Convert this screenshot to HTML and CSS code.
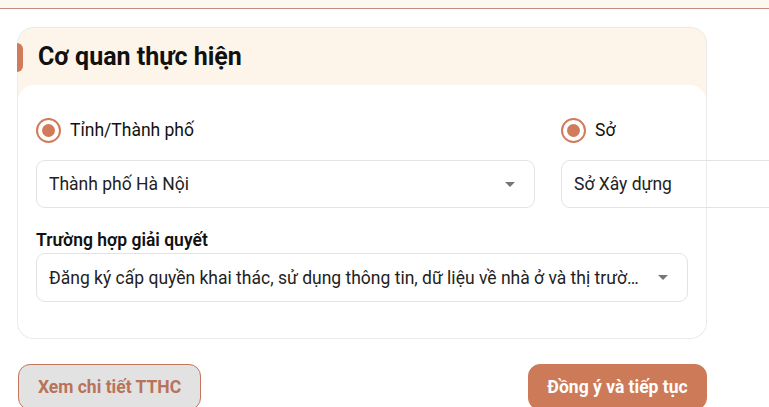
FILE: index.html
```html
<!DOCTYPE html>
<html lang="vi">
<head>
<meta charset="utf-8">
<link rel="stylesheet" href="styles.css">
</head>
<body>
<div class="topband"></div>
<main class="page">
  <section class="card">
    <header class="card-head">
      <h2 class="card-title">Cơ quan thực hiện</h2>
    </header>
    <div class="card-body">
      <div class="grid">
        <div class="col">
          <label class="radio"><span class="radio-dot"></span><span class="radio-label">Tỉnh/Thành phố</span></label>
          <div class="select"><span class="select-text">Thành phố Hà Nội</span><span class="caret"></span></div>
        </div>
        <div class="col">
          <label class="radio"><span class="radio-dot"></span><span class="radio-label">Sở</span></label>
          <div class="select"><span class="select-text">Sở Xây dựng</span></div>
        </div>
      </div>
      <div class="field-label">Trường hợp giải quyết</div>
      <div class="select select-wide"><span class="select-text">Đăng ký cấp quyền khai thác, sử dụng thông tin, dữ liệu về nhà ở và thị trường bất động sản</span><span class="caret"></span></div>
    </div>
  </section>
  <div class="actions">
    <button class="btn btn-ghost">Xem chi tiết TTHC</button>
    <button class="btn btn-primary">Đồng ý và tiếp tục</button>
  </div>
</main>
</body>
</html>
```
FILE: styles.css
```css
html, body {
  margin: 0;
  padding: 0;
  background: #fff;
  font-family: Roboto, "Liberation Sans", sans-serif;
  color: #1a1a1a;
  overflow: hidden;
}
.topband {
  height: 8px;
  background: #fdf8ef;
  border-bottom: 1px solid #c98a7c;
}
.page {
  width: 690px;
  padding-left: 17px;
  padding-top: 18px;
}
.card {
  border: 1px solid #ebebeb;
  border-radius: 16px;
  background: #fdf5ea;
}
.card-head {
  height: 57px;
  display: flex;
  align-items: center;
}
.card-head::before {
  content: "";
  width: 6px;
  height: 29px;
  margin-left: -1px;
  margin-right: 15px;
  margin-top: 1px;
  background: #d07b59;
  border-radius: 0 6px 6px 0;
}
.card-title {
  margin: 0;
  font-size: 25px;
  font-weight: 700;
  color: #111;
}
.card-body {
  background: #fff;
  border-radius: 16px;
  padding: 33px 18px 36px 18px;
}
.grid {
  display: grid;
  grid-template-columns: 499px 499px;
  column-gap: 26px;
}
.col {
  display: flex;
  flex-direction: column;
  gap: 18px;
}
.radio {
  display: flex;
  align-items: center;
  height: 24px;
  gap: 9px;
}
.radio-dot {
  box-sizing: border-box;
  width: 25px;
  height: 25px;
  border: 2px solid #d07b59;
  border-radius: 50%;
  display: flex;
  align-items: center;
  justify-content: center;
}
.radio-dot::after {
  content: "";
  width: 13px;
  height: 13px;
  border-radius: 50%;
  background: #d07b59;
}
.radio-label {
  font-size: 17.5px;
  color: #111;
}
.select {
  box-sizing: border-box;
  height: 48px;
  border: 1px solid #e3e3e3;
  border-radius: 9px;
  padding: 0 19px 0 12px;
  display: flex;
  align-items: center;
  justify-content: space-between;
  background: transparent;
}
.select-text {
  font-size: 17.5px;
  color: #222;
  white-space: nowrap;
  overflow: hidden;
  text-overflow: ellipsis;
}
.caret {
  flex: none;
  width: 0;
  height: 0;
  border-left: 5px solid transparent;
  border-right: 5px solid transparent;
  border-top: 5px solid #767676;
  margin-left: 16px;
}
.field-label {
  margin-top: 22px;
  margin-bottom: 3px;
  font-size: 17.5px;
  line-height: 20px;
  font-weight: 600;
  color: #111;
}
.select-wide {
  height: 49px;
  width: 652px;
}
.select-wide .select-text {
  width: 602px;
}
.actions {
  display: flex;
  justify-content: space-between;
  margin-top: 25px;
}
.btn {
  box-sizing: border-box;
  height: 46px;
  border-radius: 12px;
  font-family: Roboto, "Liberation Sans", sans-serif;
  font-size: 17.5px;
  font-weight: 700;
  padding: 0 16px;
}
.btn-ghost {
  width: 183px;
  margin-left: 1px;
  background: #e2e2e2;
  border: 1px solid #c2765c;
  color: #b8735a;
}
.btn-primary {
  width: 179px;
  background: #cd7a59;
  border: 1px solid #cd7a59;
  color: #fff;
}
```
